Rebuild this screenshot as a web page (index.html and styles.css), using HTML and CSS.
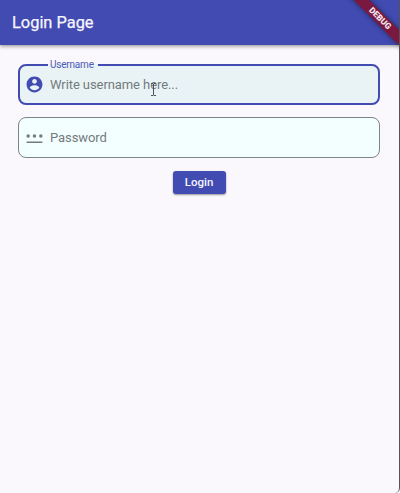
FILE: index.html
```html
<!DOCTYPE html>
<html lang="en">
<head>
<meta charset="utf-8">
<title>Login Page</title>
<link rel="stylesheet" href="styles.css">
</head>
<body>
<div class="app">
  <header class="app-bar"><h1>Login Page</h1></header>
  <div class="banner">DEBUG</div>
  <main class="form">
    <div class="field focused">
      <span class="label">Username</span>
      <svg class="icon" viewBox="0 0 24 24"><path d="M12 2C6.48 2 2 6.48 2 12s4.48 10 10 10 10-4.480 10-10S17.520 2 12 2zm0 3c1.660 0 3 1.340 3 3s-1.340 3-3 3-3-1.340-3-3 1.340-3 3-3zm0 14.200c-2.500 0-4.710-1.280-6-3.220.030-1.990 4-3.080 6-3.080 1.990 0 5.970 1.090 6 3.080-1.290 1.940-3.500 3.220-6 3.220z"/></svg>
      <span class="hint">Write username here...</span>
      <svg class="cursor" viewBox="0 0 7 13"><path d="M1 .5h2l.5.5.5-.5h2M3.500 1v11M1 12.500h2l.5-.5.5.5h2"/></svg>
    </div>
    <div class="field">
      <svg class="icon" viewBox="0 0 24 24"><circle cx="4" cy="10" r="2.200"/><circle cx="12" cy="10" r="2.200"/><circle cx="20" cy="10" r="2.200"/><path d="M2 17h20v2H2z"/></svg>
      <span class="hint">Password</span>
    </div>
    <button class="login" type="button">Login</button>
  </main>
</div>
</body>
</html>
```
FILE: styles.css
```css
* { box-sizing: border-box; }
body { margin: 0; background: #faf8fc; font-family: Roboto, sans-serif; }
.app {
  position: relative;
  height: 493px;
  overflow: hidden;
  border-right: 1px solid #55535a;
  border-bottom-right-radius: 5px;
}
.app-bar {
  display: flex;
  align-items: center;
  height: 45px;
  padding: 1px 12px 0;
  background: #424bb1;
  box-shadow: 0 1px 4px rgba(0, 0, 0, .45);
}
h1 { margin: 0; color: #f7f6ff; font-size: 16.4px; font-weight: 400; line-height: 20px; -webkit-text-stroke: .25px; }
.banner {
  position: absolute;
  top: 13px;
  left: 330px;
  width: 100px;
  height: 11px;
  transform: rotate(45deg);
  background: #7b1840;
  box-shadow: 0 0 5px rgba(0, 0, 0, .5);
  color: #f4e4eb;
  font-size: 8.5px;
  font-weight: 900;
  line-height: 11px;
  text-align: center;
}
.form { display: flex; flex-direction: column; align-items: center; padding: 19px 19px 0 18px; }
.field {
  position: relative;
  display: flex;
  align-items: center;
  gap: 6px;
  width: 100%;
  height: 41px;
  padding-left: 6px;
  border: 1px solid #7e8586;
  border-radius: 8px;
  background: #f3feff;
  color: #747b7d;
}
.focused { margin-bottom: 12px; padding-left: 5px; border: 2px solid #424bb1; background: #e9f3f6; }
.icon { width: 19px; height: 19px; fill: currentColor; }
.focused .icon { fill: #424bb1; }
.hint { font-size: 13px; line-height: 18px; letter-spacing: -.08px; }
.label {
  position: absolute;
  top: -7px;
  left: 28px;
  padding: 0 4px 0 2px;
  background: linear-gradient(transparent 5px, #e9f3f6 5px);
  color: #5159b7;
  font-size: 10px;
  line-height: 12px;
  letter-spacing: -.2px;
}
.cursor { position: absolute; left: 130px; top: 17px; width: 7px; height: 13px; fill: none; stroke: #4c5155; }
.login {
  width: 53px;
  height: 23px;
  margin-top: 13px;
  padding: 0;
  border: 0;
  border-radius: 3px;
  background: #424bb1;
  box-shadow: 0 1px 2px rgba(0, 0, 0, .4);
  color: #f5f5ff;
  font: 500 11.5px/23px Roboto, sans-serif;
}
```
